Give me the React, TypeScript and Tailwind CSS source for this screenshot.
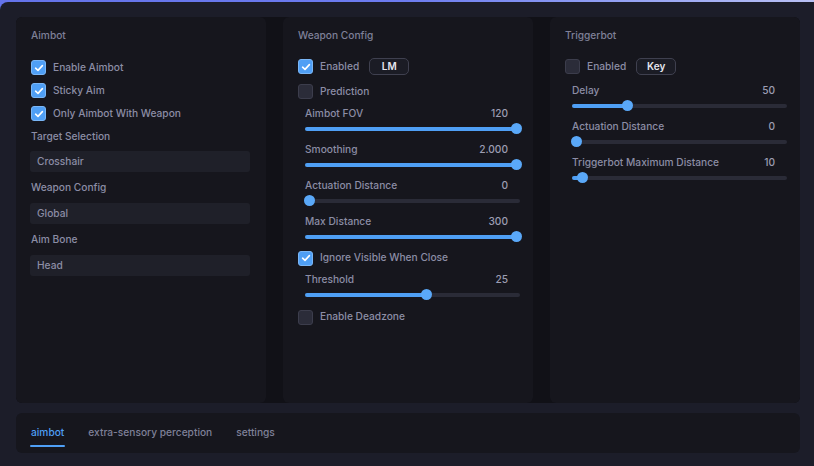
import React from 'react';

const font = { fontFamily: '"Inter", "Noto Sans", sans-serif' };

const Check = ({ on }: { on: boolean }) => (
  <div
    className={
      'w-[15px] h-[15px] rounded-[3px] border flex items-center justify-center shrink-0 ' +
      (on ? 'bg-[#4f9ff5] border-[#7ab6f6]' : 'bg-[#2b2c39] border-[#3c3d4c]')
    }
  >
    {on && (
      <svg width="10" height="10" viewBox="0 0 10 10" fill="none">
        <path d="M1.6 5.2 L4 7.4 L8.4 2.6" stroke="white" strokeWidth="1.6" strokeLinecap="round" strokeLinejoin="round" />
      </svg>
    )}
  </div>
);

const CheckRow = ({ on, label, h = 'h-[23px]', children }: { on: boolean; label: string; h?: string; children?: React.ReactNode }) => (
  <div className={`flex items-center gap-[7px] ${h}`}>
    <Check on={on} />
    <span className="text-[10.2px] font-medium text-[#8c8da5]">{label}</span>
    {children}
  </div>
);

const KeyButton = ({ text }: { text: string }) => (
  <div className="ml-[3px] w-[40px] h-[17px] rounded-[5px] border border-[#3f404f] bg-[#1b1c25] flex items-center justify-center text-[10px] font-semibold text-[#e6e6ee]">
    {text}
  </div>
);

const Slider = ({ label, value, frac, className = '' }: { label: string; value: string; frac: number; className?: string }) => (
  <div className={`pl-[7px] pr-[13px] ${className}`}>
    <div className="h-[14px] flex items-center justify-between pr-[12px] text-[10.2px] font-medium text-[#8c8da5]">
      <span>{label}</span>
      <span className="text-[#9c9db2]">{value}</span>
    </div>
    <div className="h-[15px] flex items-center">
      <div className="relative w-full h-[4px] rounded-full bg-[#2a2b37]">
        <div
          className="absolute left-0 top-0 h-full rounded-full bg-[#4f9ff5]"
          style={{ width: `calc(4px + (100% - 8px) * ${frac})` }}
        />
        <div
          className="absolute top-1/2 w-[11px] h-[11px] -mt-[5.5px] rounded-full bg-[#5aa8f8]"
          style={{ left: `calc(4px + (100% - 8px) * ${frac} - 5.5px)` }}
        />
      </div>
    </div>
  </div>
);

const Header = ({ text }: { text: string }) => (
  <div className="h-[16px] mt-[11px] flex items-center text-[10.2px] font-medium text-[#7f8098]">{text}</div>
);

const Label = ({ text, className = '' }: { text: string; className?: string }) => (
  <div className={`h-[16px] flex items-center text-[10.2px] font-medium text-[#8c8da5] ${className}`}>{text}</div>
);

const SelectBox = ({ text, className = '' }: { text: string; className?: string }) => (
  <div className={`h-[21px] mr-[16px] -ml-[1px] pl-[7px] rounded-[3px] bg-[#1f2029] flex items-center text-[10.2px] font-medium text-[#8c8da5] ${className}`}>
    {text}
  </div>
);

const panel = 'w-[250px] h-full rounded-[6px] bg-[#16161d] pl-[15px]';

export default function App() {
  return (
    <div className="w-[814px] h-[466px] overflow-hidden bg-gradient-to-r from-[#6473ea] via-[#6d7cf0] to-[#b9c0f4]" style={font}>
      <div className="mt-[2px] h-[464px] rounded-tl-[8px] bg-[#1c1d29] pl-[16px] pt-[15px]">
        <div className="flex h-[386px] w-[784px] gap-[17px] bg-[#111117] rounded-[6px]">
          <div className={panel}>
            <Header text="Aimbot" />
            <div className="mt-[12px]">
              <CheckRow on label="Enable Aimbot" />
              <CheckRow on label="Sticky Aim" />
              <CheckRow on label="Only Aimbot With Weapon" />
            </div>
            <div className="h-[23px] flex items-center text-[10.2px] font-medium text-[#8c8da5]">Target Selection</div>
            <SelectBox text="Crosshair" className="mt-[3px]" />
            <Label text="Weapon Config" className="mt-[8px]" />
            <SelectBox text="Global" className="mt-[7px]" />
            <Label text="Aim Bone" className="mt-[8px]" />
            <SelectBox text="Head" className="mt-[7px]" />
          </div>

          <div className={panel}>
            <Header text="Weapon Config" />
            <div className="mt-[10px]">
              <CheckRow on label="Enabled" h="h-[25px]">
                <KeyButton text="LM" />
              </CheckRow>
              <CheckRow on={false} label="Prediction" h="h-[25px]" />
            </div>
            <Slider label="Aimbot FOV" value="120" frac={1} className="mt-[3px]" />
            <Slider label="Smoothing" value="2.000" frac={1} className="mt-[7px]" />
            <Slider label="Actuation Distance" value="0" frac={0} className="mt-[7px]" />
            <Slider label="Max Distance" value="300" frac={1} className="mt-[7px]" />
            <CheckRow on label="Ignore Visible When Close" h="h-[24px] mt-[2px]" />
            <Slider label="Threshold" value="25" frac={0.57} className="mt-[3px]" />
            <CheckRow on={false} label="Enable Deadzone" h="h-[24px] mt-[3px]" />
          </div>

          <div className={panel}>
            <Header text="Triggerbot" />
            <div className="mt-[10px]">
              <CheckRow on={false} label="Enabled" h="h-[25px]">
                <KeyButton text="Key" />
              </CheckRow>
            </div>
            <Slider label="Delay" value="50" frac={0.25} className="mt-[5px]" />
            <Slider label="Actuation Distance" value="0" frac={0} className="mt-[7px]" />
            <Slider label="Triggerbot Maximum Distance" value="10" frac={0.03} className="mt-[7px]" />
          </div>
        </div>

        <div className="mt-[10px] h-[40px] w-[784px] rounded-[6px] bg-[#16161d] flex items-center gap-[24px] pl-[15px] text-[10.2px] font-medium">
          <div className="relative text-[#4f9ff5]">
            aimbot
            <div className="absolute -left-[1px] -right-[1px] -bottom-[6px] h-[2px] rounded-full bg-[#4f9ff5]" />
          </div>
          <div className="text-[#7f8098]">extra-sensory perception</div>
          <div className="text-[#7f8098]">settings</div>
        </div>
      </div>
    </div>
  );
}
